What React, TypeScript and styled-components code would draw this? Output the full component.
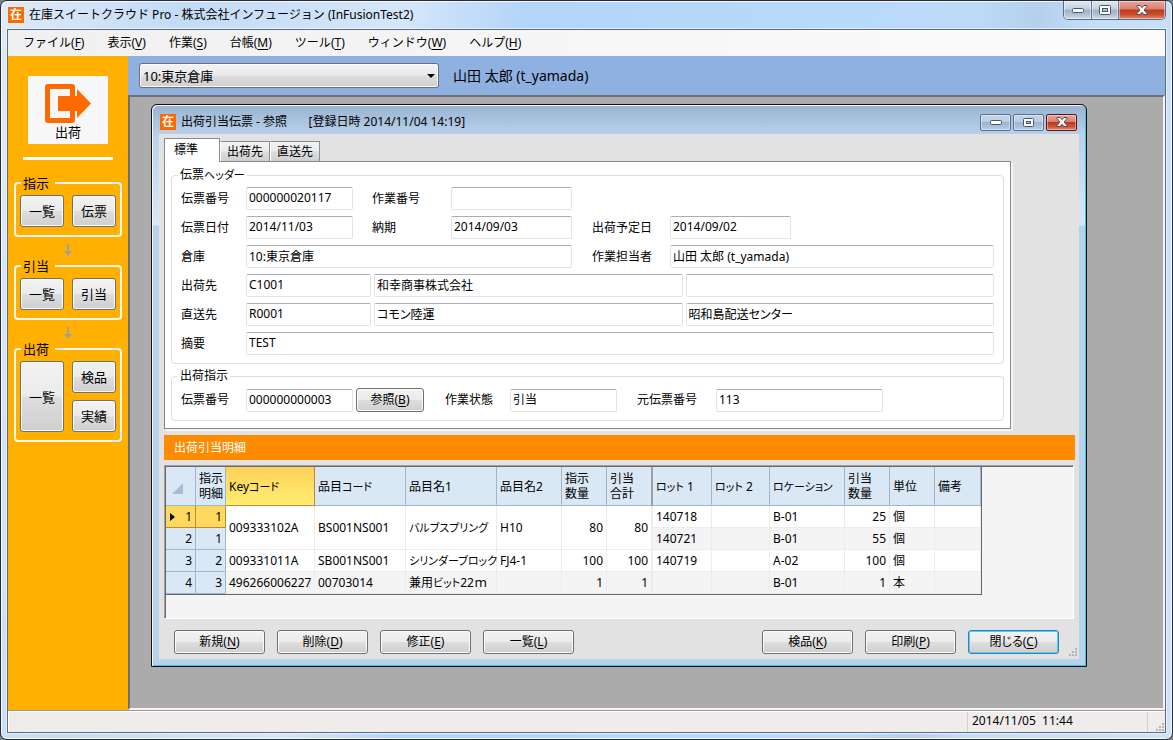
import React from "react";
import styled, { createGlobalStyle, css } from "styled-components";

const GlobalStyle = createGlobalStyle`
  *, *::before, *::after { box-sizing: border-box; }
  body {
    margin: 0;
    background: #7d7f85;
    color: #000;
    font: 12px/16px "Noto Sans", "Noto Sans CJK JP", sans-serif;
  }
  button, input, select { font: inherit; color: inherit; margin: 0; }
  u { text-underline-offset: 2px; }
`;

/* ---------- application window ---------- */

const AppWindow = styled.div`
  display: flex;
  flex-direction: column;
  min-height: 100vh;
  padding: 0 6px 6px;
  border: 1px solid #2b2b33;
  border-radius: 7px;
  background: linear-gradient(100deg, #dfeaf8 0, #c3dcf6 180px, #d5e6fa 400px, #b3d5f8 520px, #bcdbf9 75%, #b4d0ec 80%, #c2defa 84%, #cfe2fa 100%);
  box-shadow: inset 0 0 0 1px #f3f9ff;
`;

const TitleBar = styled.header`
  display: flex;
  align-items: center;
  height: 28px;
  padding-left: 1px;
`;

const MdiTitleBar = styled(TitleBar)`
  height: 28px;
  padding: 4px 2px 0 1px;
`;

const AppMark = styled.span`
  display: grid;
  place-items: center;
  width: 16px;
  height: 16px;
  margin-right: 5px;
  background: #ff6a00;
  color: #fff;
  font-size: 12px;
  font-weight: 700;
`;

const Title = styled.h1`
  flex: 1;
  margin: 0;
  font-size: 12px;
  font-weight: 400;
  white-space: pre;
`;

const CaptionGroup = styled.div`
  display: flex;
  align-self: flex-start;
  border: 1px solid #5f6b7c;
  border-top: 0;
  border-radius: 0 0 5px 5px;
  overflow: hidden;
`;

const redGlass = css`
  background: linear-gradient(#e8a79c 0, #d9806f 45%, #bd3a1e 50%, #c8502f 75%, #e38a66 100%);
`;
const blueGlass = css`
  background: linear-gradient(#dde7f2 0, #c3d1e1 45%, #9fb2c8 50%, #aec0d4 75%, #d0deec 100%);
`;

const CaptionButton = styled.button<{ $close?: boolean }>`
  display: grid;
  place-items: center;
  width: ${(p) => (p.$close ? 47 : 27)}px;
  height: 18px;
  padding: 0;
  border: 0;
  ${(p) => (p.$close ? redGlass : blueGlass)}
  box-shadow: inset 0 0 0 1px rgba(255, 255, 255, 0.45);
  & + & { border-left: 1px solid #6a7688; }
`;

const MdiCaptions = styled.div`
  display: flex;
  gap: 2px;
`;

const MdiCaptionButton = styled.button<{ $close?: boolean }>`
  display: grid;
  place-items: center;
  width: 31px;
  height: 17px;
  padding: 0;
  border: 1px solid ${(p) => (p.$close ? "#571520" : "#5d7190")};
  border-radius: 2px;
  ${(p) =>
    p.$close
      ? redGlass
      : css`background: linear-gradient(#c3d4e8 0, #b9cde3 45%, #9db5d0 50%, #b5cce5 100%);`}
  box-shadow: inset 0 0 0 1px rgba(255, 255, 255, 0.4);
`;

const Client = styled.div`
  flex: 1;
  display: flex;
  flex-direction: column;
  border: 1px solid #5d6b7c;
  box-shadow: 0 0 0 1px rgba(240, 248, 255, 0.7);
  background: #f0eceb;
`;

const MenuBar = styled.nav`
  display: flex;
  gap: 3px;
  height: 26px;
  padding-left: 5px;
  background: linear-gradient(90deg, #f0f0f0, #fcfcfc);
`;

const MenuItem = styled.button`
  padding: 0 10px;
  border: 0;
  background: none;
`;

const Main = styled.div`
  flex: 1;
  display: flex;
`;

/* ---------- sidebar ---------- */

const Sidebar = styled.aside`
  flex: none;
  width: 120px;
  padding: 20px 6px 0;
  background: #ffb000;
  font-size: 13px;
`;

const ShipTile = styled.button`
  display: flex;
  flex-direction: column;
  align-items: center;
  width: 80px;
  height: 68px;
  margin: 0 auto;
  padding: 8px 0 0;
  border: 0;
  background: #f7f7f7;
  line-height: 17px;
`;

const Divider = styled.hr`
  height: 3px;
  margin: 13px 9px 14px;
  border: 0;
  background: #fff;
`;

const StepGroup = styled.fieldset`
  min-width: 0;
  margin: 0;
  padding: 3px 4px 8px;
  border: 2px solid #fbf8f0;
  border-radius: 4px;
`;

const StepLegend = styled.legend`
  margin-left: 1px;
  padding: 0 6px 0 2px;
  line-height: 18px;
`;

const StepButtons = styled.div`
  display: grid;
  grid-template-columns: 1fr 1fr;
  grid-auto-rows: 32px;
  gap: 7px 8px;
`;

const buttonFace = css`
  border: 1px solid #707070;
  border-radius: 3px;
  background: linear-gradient(#f2f2f2 0, #ebebeb 48%, #dddddd 52%, #cfcfcf 100%);
  box-shadow: inset 0 0 0 1px #fbfbfb;
`;

const StepButton = styled.button<{ $tall?: boolean }>`
  ${buttonFace}
  padding: 0;
  grid-row: ${(p) => (p.$tall ? "span 2" : "auto")};
`;

const DownArrow = styled.svg`
  display: block;
  margin: 7px auto 1px;
`;

/* ---------- work area ---------- */

const Work = styled.main`
  flex: 1;
  min-width: 0;
  display: flex;
  flex-direction: column;
`;

const Toolbar = styled.div`
  display: flex;
  align-items: center;
  gap: 14px;
  height: 39px;
  padding-left: 11px;
  background: #8eb1e2;
`;

const ComboWrap = styled.div`
  position: relative;
  width: 300px;
`;

const Combo = styled.select`
  ${buttonFace}
  display: block;
  appearance: none;
  width: 100%;
  height: 25px;
  padding: 0 20px 0 3px;
  font-size: 13px;
`;

const ComboArrow = styled.svg`
  position: absolute;
  right: 4px;
  top: 11px;
  pointer-events: none;
`;

const UserName = styled.span`
  font-size: 14px;
`;

const MdiArea = styled.div`
  flex: 1;
  display: flex;
  padding: 7px 76px 41px 21px;
  border: 2px solid #707070;
  border-right-color: #f4f4f4;
  border-bottom-color: #f4f4f4;
  background: #ababab;
`;

const MdiWindow = styled.section`
  flex: 1;
  min-width: 0;
  display: flex;
  flex-direction: column;
  padding: 1px 7px 7px;
  border: 1px solid #111;
  border-radius: 6px 6px 0 0;
  background: linear-gradient(#99b4d1 0, #b9d1ea 30px, #c3d9ef 60px, #d9e7f6 120px, #b9d1ea 121px, #b9d1ea 100%);
  box-shadow: inset 1px 1px #f4f9fe, inset -1px -1px #38c6e4;
`;

const MdiClient = styled.div`
  flex: 1;
  display: flex;
  flex-direction: column;
  padding: 4px 4px 0 5px;
  background: #e2e2e2;
  font-feature-settings: "palt";
`;

const Tabs = styled.div`
  display: flex;
  align-items: flex-end;
  height: 23px;
`;

const Tab = styled.button<{ $active?: boolean }>`
  height: 20px;
  padding: 0;
  width: 50px;
  border: 1px solid #898c95;
  border-bottom: 0;
  border-left-color: #fff;
  background: linear-gradient(#f2f2f2 0, #ebebeb 48%, #dddddd 52%, #cfcfcf 100%);
  ${(p) =>
    p.$active &&
    css`
      width: 56px;
      height: 24px;
      margin-bottom: -1px;
      padding: 0 10px 2px 9px;
      border-left-color: #898c95;
      background: #fff;
      text-align: left;
      z-index: 1;
    `}
`;

const TabPanel = styled.div`
  margin-right: 64px;
  padding: 5px 6px 7px;
  border: 1px solid #828790;
  background: #fff;
  box-shadow: 2px 2px #f4f4f4;
`;

const FieldGroup = styled.fieldset`
  display: flex;
  flex-direction: column;
  gap: 6px;
  min-width: 0;
  margin: 0 0 4px;
  padding: 4px 9px 8px;
  border: 1px solid #d5dfe5;
  border-radius: 4px;
  &:last-child { margin-bottom: 0; }
`;

const GroupLegend = styled.legend`
  height: 16px;
  margin-left: -3px;
  padding: 0 2px;
  line-height: 16px;
`;

const FormRow = styled.div`
  display: flex;
  align-items: center;
  gap: 3px;
`;

const FieldLabel = styled.label<{ $w: number; $gap?: number }>`
  flex: none;
  width: ${(p) => p.$w}px;
  margin-left: ${(p) => p.$gap ?? 0}px;
  margin-right: -3px;
`;

const Field = styled.input<{ $w?: number }>`
  ${(p) => (p.$w ? `flex: none; width: ${p.$w}px;` : "flex: 1; min-width: 0;")}
  height: 23px;
  padding: 0 2px 2px;
  border: 1px solid #e2e3ea;
  border-top-color: #abadb3;
  border-radius: 2px;
  background: #fff;
  outline: 0;
`;

const PushButton = styled.button<{ $w: number; $default?: boolean }>`
  ${buttonFace}
  width: ${(p) => p.$w}px;
  height: 24px;
  padding: 0;
  ${(p) =>
    p.$default &&
    css`
      border-color: #3c7fb1;
      box-shadow: inset 0 0 0 1px #48d0f5;
    `}
`;

const SectionBar = styled.h2`
  flex: none;
  height: 25px;
  margin: 6px 0 5px;
  padding-left: 10px;
  background: #ff8c00;
  color: #fff;
  font-size: 12px;
  font-weight: 400;
  line-height: 25px;
`;

/* ---------- detail grid ---------- */

const GridBox = styled.div`
  flex: 1;
  min-height: 152px;
  margin-right: 1px;
  padding: 1px;
  border: 1px solid #fff;
  border-top-color: #a0a0a0;
  border-left-color: #a0a0a0;
  background: #f4f4f4;
  box-shadow: inset 1px 1px #696969;
`;

const DetailTable = styled.table`
  table-layout: fixed;
  width: 815px;
  border-spacing: 0;
  border-right: 1px solid #696969;
  border-bottom: 1px solid #696969;
`;

const HeadCell = styled.th<{ $key?: boolean; $split?: boolean }>`
  height: 39px;
  padding: 0 3px;
  border-right: 1px solid #9eb6ce;
  border-bottom: 1px solid #9eb6ce;
  background: #dae7f5;
  font-weight: 400;
  line-height: 15px;
  text-align: left;
  white-space: pre;
  ${(p) =>
    p.$key &&
    css`
      border-color: #c28a30;
      background: linear-gradient(#ffd058, #ffee72);
    `}
  ${(p) => p.$split && css`border-right: 2px solid #a0a0a0;`}
`;

const Kana = styled.span`
  font-size: 11px;
`;

const CornerMark = styled.svg`
  display: block;
  margin: 4px 0 0 3px;
`;

const RowHead = styled.th<{ $current?: boolean }>`
  height: 22px;
  padding: 0 3px 0 0;
  border-right: 1px solid #9eb6ce;
  border-bottom: 1px solid #9eb6ce;
  background: #dae7f5;
  font-weight: 400;
  text-align: right;
  ${(p) =>
    p.$current &&
    css`
      border-color: #c28a30;
      background: #ffd860;
    `}
`;

const RowHeadInner = styled.span`
  display: flex;
  align-items: center;
  justify-content: space-between;
  padding-left: 4px;
`;

const Cell = styled.td<{ $num?: boolean; $alt?: boolean; $split?: boolean }>`
  height: 22px;
  padding: 0 3px;
  border-right: ${(p) => (p.$split ? 2 : 1)}px solid #ececec;
  border-bottom: 1px solid #ececec;
  background: ${(p) => (p.$alt ? "#f4f4f4" : "#fff")};
  text-align: ${(p) => (p.$num ? "right" : "left")};
  white-space: nowrap;
`;

const Actions = styled.div`
  display: flex;
  gap: 12px;
  padding: 11px 16px 5px 10px;
`;

const Spacer = styled.div`
  flex: 1;
`;

const GripHolder = styled.div`
  align-self: flex-end;
  width: 9px;
  height: 9px;
  margin: -11px -2px 2px 0;
  line-height: 0;
`;

/* ---------- status bar ---------- */

const StatusBar = styled.footer`
  display: flex;
  justify-content: flex-end;
  height: 22px;
  border-top: 1px solid #9a9a9a;
  box-shadow: inset 1px 1px #fff;
  padding-top: 1px;
`;

const StatusTime = styled.time`
  width: 181px;
  padding-left: 4px;
  border: solid #d4d0cf;
  border-width: 0 1px;
  line-height: 18px;
  white-space: pre;
`;

const StatusGrip = styled.div`
  width: 17px;
  padding: 11px 0 0 7px;
  line-height: 0;
`;

/* ---------- drawings ---------- */

const MinimizeGlyph = () => (
  <svg width="12" height="5" viewBox="0 0 12 5">
    <rect x=".5" y=".5" width="11" height="4" rx="1" fill="#fff" stroke="#4c5568" />
  </svg>
);

const MaximizeGlyph = ({ small }: { small?: boolean }) =>
  small ? (
    <svg width="11" height="9" viewBox="0 0 11 9">
      <rect x=".5" y=".5" width="10" height="8" rx="1" fill="#fff" stroke="#4c5568" />
      <rect x="3.5" y="3.5" width="4" height="2" fill="#a9bfd8" stroke="#4c5568" />
    </svg>
  ) : (
    <svg width="12" height="10" viewBox="0 0 12 10">
      <rect x=".5" y=".5" width="11" height="9" rx="1" fill="#fff" stroke="#4c5568" />
      <rect x="3.5" y="3.5" width="5" height="3" fill="#a9bfd8" stroke="#4c5568" />
    </svg>
  );

const CloseGlyph = () => (
  <svg width="12" height="10" viewBox="0 0 12 10">
    <path
      d="M1 .5h3L6 2.700 8 .5h3v1L8 5l3 3.500v1H8L6 7.300 4 9.500H1v-1L4 5 1 1.500z"
      fill="#fff"
      stroke="#54485a"
      strokeLinejoin="round"
    />
  </svg>
);

const ShipGlyph = () => (
  <svg width="47" height="40" viewBox="0 0 47 40">
    <path
      fill="#ff6a00"
      fillRule="evenodd"
      d="M3 0h24q3 0 3 3v9h2V5l14 14.500L32 34v-7h-2v9q0 3-3 3H3q-3 0-3-3V3q0-3 3-3zM5 5v29h20v-7H13V12h12V5z"
    />
  </svg>
);

const Grip = () => (
  <svg width="9" height="9" viewBox="0 0 9 9" fill="#b4b4b4">
    {[[7, 0], [4, 3], [7, 3], [1, 6], [4, 6], [7, 6]].map(([x, y]) => (
      <rect key={`${x}-${y}`} x={x} y={y} width="2" height="2" />
    ))}
  </svg>
);

const StepArrow = () => (
  <DownArrow width="8" height="12" viewBox="0 0 8 12">
    <path d="M3 0h2v7h3L4 12 0 7h3z" fill="#a3a09a" />
  </DownArrow>
);

/* ---------- data ---------- */

const menus = [
  ["ファイル", "F"],
  ["表示", "V"],
  ["作業", "S"],
  ["台帳", "M"],
  ["ツール", "T"],
  ["ウィンドウ", "W"],
  ["ヘルプ", "H"],
];

const widths = [30, 30, 89, 91, 91, 65, 45, 46, 59, 58, 75, 45, 45, 46];
const heads = [
  "指示\n明細", "Keyコード", "品目コード", "品目名1", "品目名2", "指示\n数量", "引当\n合計",
  "ロット 1", "ロット 2", "ロケーション", "引当\n数量", "単位", "備考",
];

type Row = { line: string; item?: string[]; span?: number; lot: string[] };
const rows: Row[] = [
  { line: "1", span: 2, item: ["009333102A", "BS001NS001", "バルブスプリング", "H10", "80", "80"], lot: ["140718", "", "B-01", "25", "個", ""] },
  { line: "1", lot: ["140721", "", "B-01", "55", "個", ""] },
  { line: "2", item: ["009331011A", "SB001NS001", "シリンダーブロック", "FJ4-1", "100", "100"], lot: ["140719", "", "A-02", "100", "個", ""] },
  { line: "3", item: ["496266006227", "00703014", "兼用ビット22ｍ", "", "1", "1"], lot: ["", "", "B-01", "1", "本", ""] },
];

/* Katakana runs are set a size smaller than the kanji round them. */
const withKana = (text: string) =>
  text
    .split(/([ァ-ヶー]+)/)
    .map((part, i) => (i % 2 ? <Kana key={i}>{part}</Kana> : part));

const Key = ({ text, k }: { text: string; k: string }) => (
  <>
    {text}(<u>{k}</u>)
  </>
);

const LabeledField = (p: { id: string; label: string; value?: string; lw: number; w?: number; gap?: number }) => (
  <>
    <FieldLabel htmlFor={p.id} $w={p.lw} $gap={p.gap}>{p.label}</FieldLabel>
    <Field id={p.id} $w={p.w} defaultValue={p.value ?? ""} />
  </>
);

const DetailGrid = () => (
  <GridBox>
    <DetailTable>
      <colgroup>
        {widths.map((w, i) => (
          <col key={i} width={w} />
        ))}
      </colgroup>
      <thead>
        <tr>
          <HeadCell>
            <CornerMark width="11" height="11" viewBox="0 0 11 11">
              <path d="M11 0v11H0z" fill="#a9bbd6" />
            </CornerMark>
          </HeadCell>
          {heads.map((h, i) => (
            <HeadCell key={i} scope="col" $key={i === 1} $split={i === 6}>{withKana(h)}</HeadCell>
          ))}
        </tr>
      </thead>
      <tbody>
        {rows.map((r, i) => (
          <tr key={i}>
            <RowHead scope="row" $current={i === 0}>
              <RowHeadInner>
                <svg width="5" height="8" viewBox="0 0 5 8">
                  {i === 0 && <path d="M0 0l5 4-5 4z" />}
                </svg>
                {i + 1}
              </RowHeadInner>
            </RowHead>
            <RowHead as="td" $current={i === 0}>{r.line}</RowHead>
            {r.item?.map((v, j) => (
              <Cell key={j} rowSpan={r.span ?? 1} $num={j > 3} $split={j === 5} $alt={i === 3}>{withKana(v)}</Cell>
            ))}
            {r.lot.map((v, j) => (
              <Cell key={`lot${j}`} $num={j === 3} $alt={i % 2 === 1}>{v}</Cell>
            ))}
          </tr>
        ))}
      </tbody>
    </DetailTable>
  </GridBox>
);

const SlipWindow = () => (
  <MdiWindow>
    <MdiTitleBar>
      <AppMark>在</AppMark>
      <Title as="h2">{"出荷引当伝票 - 参照　   [登録日時 2014/11/04 14:19]"}</Title>
      <MdiCaptions>
        <MdiCaptionButton aria-label="最小化"><MinimizeGlyph /></MdiCaptionButton>
        <MdiCaptionButton aria-label="最大化"><MaximizeGlyph small /></MdiCaptionButton>
        <MdiCaptionButton $close aria-label="閉じる"><CloseGlyph /></MdiCaptionButton>
      </MdiCaptions>
    </MdiTitleBar>
    <MdiClient>
      <Tabs role="tablist">
        <Tab role="tab" $active aria-selected>標準</Tab>
        <Tab role="tab">出荷先</Tab>
        <Tab role="tab">直送先</Tab>
      </Tabs>
      <TabPanel role="tabpanel">
        <FieldGroup>
          <GroupLegend>{withKana("伝票ヘッダー")}</GroupLegend>
          <FormRow>
            <LabeledField id="slipNo" label="伝票番号" value="000000020117" lw={65} w={107} />
            <LabeledField id="workNo" label="作業番号" lw={79} w={121} gap={16} />
          </FormRow>
          <FormRow>
            <LabeledField id="slipDate" label="伝票日付" value="2014/11/03" lw={65} w={107} />
            <LabeledField id="dueDate" label="納期" value="2014/09/03" lw={79} w={121} gap={16} />
            <LabeledField id="shipDate" label="出荷予定日" value="2014/09/02" lw={78} w={121} gap={17} />
          </FormRow>
          <FormRow>
            <LabeledField id="warehouse" label="倉庫" value="10:東京倉庫" lw={65} w={326} />
            <LabeledField id="worker" label="作業担当者" value="山田 太郎 (t_yamada)" lw={78} gap={17} />
          </FormRow>
          <FormRow>
            <LabeledField id="shipTo" label="出荷先" value="C1001" lw={65} w={125} />
            <Field aria-label="出荷先名" defaultValue="和幸商事株式会社" />
            <Field aria-label="出荷先部署" />
          </FormRow>
          <FormRow>
            <LabeledField id="directTo" label="直送先" value="R0001" lw={65} w={125} />
            <Field aria-label="直送先名" defaultValue="コモン陸運" />
            <Field aria-label="直送先部署" defaultValue="昭和島配送センター" />
          </FormRow>
          <FormRow>
            <LabeledField id="memo" label="摘要" value="TEST" lw={65} />
          </FormRow>
        </FieldGroup>
        <FieldGroup>
          <GroupLegend>出荷指示</GroupLegend>
          <FormRow>
            <LabeledField id="orderNo" label="伝票番号" value="000000000003" lw={65} w={107} />
            <PushButton $w={68}><Key text="参照" k="B" /></PushButton>
            <LabeledField id="state" label="作業状態" value="引当" lw={65} w={107} gap={18} />
            <LabeledField id="srcNo" label="元伝票番号" value="113" lw={79} w={167} gap={17} />
          </FormRow>
        </FieldGroup>
      </TabPanel>
      <SectionBar>出荷引当明細</SectionBar>
      <DetailGrid />
      <Actions>
        <PushButton $w={91}><Key text="新規" k="N" /></PushButton>
        <PushButton $w={91}><Key text="削除" k="D" /></PushButton>
        <PushButton $w={91}><Key text="修正" k="E" /></PushButton>
        <PushButton $w={91}><Key text="一覧" k="L" /></PushButton>
        <Spacer />
        <PushButton $w={91}><Key text="検品" k="K" /></PushButton>
        <PushButton $w={91}><Key text="印刷" k="P" /></PushButton>
        <PushButton $w={91} $default><Key text="閉じる" k="C" /></PushButton>
      </Actions>
      <GripHolder><Grip /></GripHolder>
    </MdiClient>
  </MdiWindow>
);

export default function App() {
  return (
    <>
      <GlobalStyle />
      <AppWindow>
        <TitleBar>
          <AppMark>在</AppMark>
          <Title>在庫スイートクラウド Pro - 株式会社インフュージョン (InFusionTest2)</Title>
          <CaptionGroup>
            <CaptionButton aria-label="最小化"><MinimizeGlyph /></CaptionButton>
            <CaptionButton aria-label="最大化"><MaximizeGlyph /></CaptionButton>
            <CaptionButton $close aria-label="閉じる"><CloseGlyph /></CaptionButton>
          </CaptionGroup>
        </TitleBar>
        <Client>
          <MenuBar>
            {menus.map(([text, k]) => (
              <MenuItem key={k}><Key text={text} k={k} /></MenuItem>
            ))}
          </MenuBar>
          <Main>
            <Sidebar>
              <ShipTile>
                <ShipGlyph />
                出荷
              </ShipTile>
              <Divider />
              <StepGroup>
                <StepLegend>指示</StepLegend>
                <StepButtons>
                  <StepButton>一覧</StepButton>
                  <StepButton>伝票</StepButton>
                </StepButtons>
              </StepGroup>
              <StepArrow />
              <StepGroup>
                <StepLegend>引当</StepLegend>
                <StepButtons>
                  <StepButton>一覧</StepButton>
                  <StepButton>引当</StepButton>
                </StepButtons>
              </StepGroup>
              <StepArrow />
              <StepGroup>
                <StepLegend>出荷</StepLegend>
                <StepButtons>
                  <StepButton $tall>一覧</StepButton>
                  <StepButton>検品</StepButton>
                  <StepButton>実績</StepButton>
                </StepButtons>
              </StepGroup>
            </Sidebar>
            <Work>
              <Toolbar>
                <ComboWrap>
                  <Combo aria-label="倉庫" defaultValue="10">
                    <option value="10">10:東京倉庫</option>
                  </Combo>
                  <ComboArrow width="8" height="4" viewBox="0 0 8 4">
                    <path d="M0 0h8L4 4z" />
                  </ComboArrow>
                </ComboWrap>
                <UserName>山田 太郎 (t_yamada)</UserName>
              </Toolbar>
              <MdiArea>
                <SlipWindow />
              </MdiArea>
            </Work>
          </Main>
          <StatusBar>
            <StatusTime>{"2014/11/05  11:44"}</StatusTime>
            <StatusGrip><Grip /></StatusGrip>
          </StatusBar>
        </Client>
      </AppWindow>
    </>
  );
}
